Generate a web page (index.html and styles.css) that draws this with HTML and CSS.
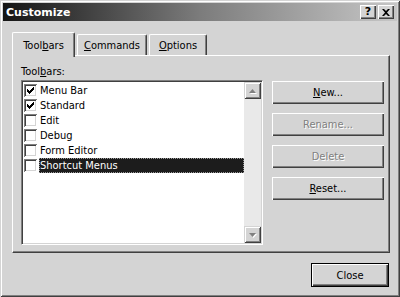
FILE: index.html
```html
<html>
<head>
<link rel="stylesheet" href="styles.css">
</head>
<body>

<div class="window">
	<div class="titlebar">
		<span class="title">Customize</span>
		<div class="title-buttons">
			<span class="tbtn help">?</span>
			<span class="tbtn">
				<svg width="8" height="7" viewBox="0 0 8 7"><path d="M0 0h2l2 2 2-2h2L5 3.5 8 7H6L4 5 2 7H0l3-3.5z" fill="#000"/></svg>
			</span>
		</div>
	</div>

	<div class="content">
		<div class="tabs">
			<div class="tab active">Tool<u>b</u>ars</div>
			<div class="tab tab-commands"><u>C</u>ommands</div>
			<div class="tab tab-options"><u>O</u>ptions</div>
		</div>

		<div class="panel">
			<div class="list-col">
				<div class="label">Tool<u>b</u>ars:</div>
				<div class="listbox">
					<div class="items">
						<div class="item"><span class="check"><svg class="tick" width="7" height="7" viewBox="0 0 7 7"><path d="M0 2h1v3H0zM1 3h1v3H1zM2 4h1v3H2zM3 3h1v3H3zM4 2h1v3H4zM5 1h1v3H5zM6 0h1v3H6z" fill="#000"/></svg></span><span class="item-text">Menu Bar</span></div>
						<div class="item"><span class="check"><svg class="tick" width="7" height="7" viewBox="0 0 7 7"><path d="M0 2h1v3H0zM1 3h1v3H1zM2 4h1v3H2zM3 3h1v3H3zM4 2h1v3H4zM5 1h1v3H5zM6 0h1v3H6z" fill="#000"/></svg></span><span class="item-text">Standard</span></div>
						<div class="item"><span class="check"></span><span class="item-text">Edit</span></div>
						<div class="item"><span class="check"></span><span class="item-text">Debug</span></div>
						<div class="item"><span class="check"></span><span class="item-text">Form Editor</span></div>
						<div class="item selected"><span class="check"></span><span class="item-text">Shortcut Menus</span></div>
					</div>
					<div class="scrollbar">
						<div class="sbtn">
							<svg width="7" height="4" viewBox="0 0 7 4"><path d="M3.5 0L7 4H0z" fill="#808080"/></svg>
						</div>
						<div class="track"></div>
						<div class="sbtn">
							<svg width="7" height="4" viewBox="0 0 7 4"><path d="M0 0h7L3.5 4z" fill="#808080"/></svg>
						</div>
					</div>
				</div>
			</div>

			<div class="btn-col">
				<div class="btn"><span><u>N</u>ew...</span></div>
				<div class="btn disabled"><span>Rename...</span></div>
				<div class="btn disabled"><span>Delete</span></div>
				<div class="btn"><span><u>R</u>eset...</span></div>
			</div>
		</div>

		<div class="footer">
			<div class="btn default"><span>Close</span></div>
		</div>
	</div>
</div>

</body>
</html>
```

FILE: styles.css
```css
body {
	margin: 0;
	background: #d4d4d4;
	font-family: "DejaVu Sans Condensed", "Liberation Sans", sans-serif;
	font-size: 11px;
	color: #000;
}

.window {
	width: 400px;
	height: 297px;
	box-sizing: border-box;
	padding: 3px;
	background: #d4d4d4;
	box-shadow: inset 1px 1px #d4d4d4, inset -1px -1px #404040, inset 2px 2px #fff, inset -2px -2px #808080;
	display: flex;
	flex-direction: column;
}

.titlebar {
	height: 18px;
	display: flex;
	align-items: center;
	justify-content: space-between;
	padding: 0 3px 0 3px;
	background: linear-gradient(to right, #141414, #7c7c7c 50%, #c6c6c6);
}
.title {
	color: #fff;
	font-family: "DejaVu Sans", sans-serif;
	font-weight: bold;
	font-size: 11px;
}
.title-buttons {
	display: flex;
	gap: 2px;
}
.tbtn {
	width: 16px;
	height: 14px;
	box-sizing: border-box;
	background: #d4d4d4;
	box-shadow: inset 1px 1px #fff, inset -1px -1px #404040, inset -2px -2px #808080;
	display: flex;
	align-items: center;
	justify-content: center;
	font-family: "DejaVu Sans", sans-serif;
	font-weight: bold;
	font-size: 11px;
	line-height: 14px;
}

.content {
	flex: 1;
	display: flex;
	flex-direction: column;
	padding: 11px 7px 0 9px;
}

.tabs {
	display: flex;
	align-items: flex-end;
	height: 23px;
	position: relative;
	z-index: 1;
}
.tab {
	height: 21px;
	box-sizing: border-box;
	padding-top: 4px;
	text-align: center;
	background: #d4d4d4;
	border-top: 1px solid #fff;
	border-left: 1px solid #fff;
	border-right: 1px solid #404040;
	border-radius: 2px 2px 0 0;
	box-shadow: inset -1px 0 #808080;
}
.tab.active {
	width: 63px;
	height: 25px;
	margin-bottom: -2px;
	padding-top: 6px;
}
.tab-commands {
	width: 70px;
	margin-left: 2px;
}
.tab-options {
	width: 58px;
	margin-left: 2px;
}

.panel {
	height: 198px;
	box-sizing: border-box;
	display: flex;
	padding: 9px 0 0 8px;
	border-top: 1px solid #fff;
	border-left: 1px solid #fff;
	border-right: 1px solid #404040;
	border-bottom: 1px solid #404040;
	box-shadow: inset -1px -1px #808080;
}

.label {
	height: 14px;
	line-height: 13px;
	margin-bottom: 1px;
}

.listbox {
	width: 242px;
	height: 165px;
	box-sizing: border-box;
	display: flex;
	background: #fff;
	border-top: 1px solid #808080;
	border-left: 1px solid #808080;
	border-right: 1px solid #fff;
	border-bottom: 1px solid #fff;
	box-shadow: inset 1px 1px #404040, inset -1px -1px #d4d4d4;
	padding: 1px;
}
.items {
	flex: 1;
	padding-top: 1px;
}
.item {
	height: 15px;
	display: flex;
	align-items: center;
}
.check {
	width: 13px;
	height: 13px;
	box-sizing: border-box;
	margin-left: 1px;
	margin-right: 2px;
	background: #fff;
	box-shadow: inset 1px 1px #808080, inset -1px -1px #fff, inset 2px 2px #404040, inset -2px -2px #d4d4d4;
	display: flex;
	align-items: center;
	justify-content: center;
}
.tick {
	shape-rendering: crispEdges;
}
.item-text {
	padding-left: 1px;
	height: 15px;
	line-height: 15px;
}
.item.selected .item-text {
	flex: 1;
	box-sizing: border-box;
	background: #1c1c1c;
	color: #fff;
	outline: 1px dotted #9a9a9a;
	outline-offset: -1px;
}

.scrollbar {
	width: 17px;
	display: flex;
	flex-direction: column;
}
.sbtn {
	height: 17px;
	background: #d4d4d4;
	box-shadow: inset 1px 1px #d4d4d4, inset -1px -1px #404040, inset 2px 2px #fff, inset -2px -2px #808080;
	display: flex;
	align-items: center;
	justify-content: center;
}
.sbtn svg {
	filter: drop-shadow(1px 1px 0 #fff);
}
.track {
	flex: 1;
	background: #e9e9e9;
}

.btn-col {
	display: flex;
	flex-direction: column;
	gap: 9px;
	margin-left: 9px;
	padding-top: 16px;
}
.btn {
	width: 112px;
	height: 23px;
	box-sizing: border-box;
	background: #d4d4d4;
	box-shadow: inset 1px 1px #fff, inset -1px -1px #404040, inset -2px -2px #808080;
	display: flex;
	align-items: center;
	justify-content: center;
}
.btn.disabled {
	color: #808080;
	text-shadow: 1px 1px #fff;
}

.footer {
	display: flex;
	justify-content: flex-end;
	padding-top: 10px;
	padding-right: 1px;
}
.btn.default {
	width: 78px;
	height: 24px;
	border: 1px solid #000;
}
```
